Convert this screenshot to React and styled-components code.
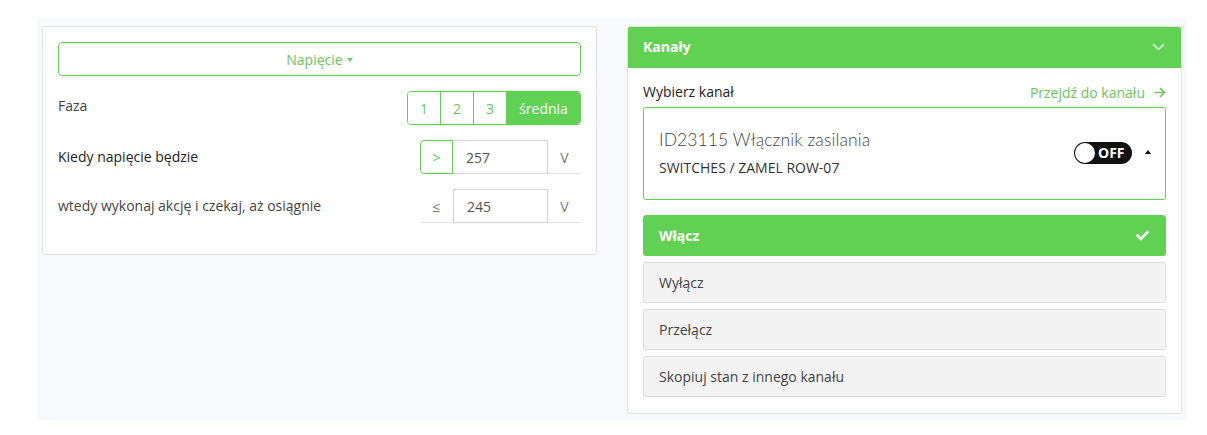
import React from "react";
import styled, { createGlobalStyle } from "styled-components";
import { FaCheck } from "react-icons/fa";

const green = "#60d152";
const textGreen = "#6cc462";

const GlobalStyle = createGlobalStyle`
  body {
    margin: 0;
    background: #ffffff;
    font-family: "Open Sans", "Liberation Sans", sans-serif;
    color: #333333;
  }
  * { box-sizing: border-box; }
`;

const Page = styled.div`
  padding: 18px 20px 15px 37px;
`;

const Area = styled.div`
  width: 1150px;
  background: #f8f9fa;
  padding: 8px 5px 6px;
  display: flex;
  align-items: flex-start;
  gap: 30px;
`;

const Card = styled.div`
  width: 555px;
  background: #ffffff;
  border: 1px solid #e2e4e0;
  border-radius: 3px;
  overflow: hidden;
`;

const CardBody = styled.div`
  padding: 15px 15px 16px;
  display: flex;
  flex-direction: column;
`;

const Dropdown = styled.div`
  height: 34px;
  border: 1px solid ${green};
  border-radius: 4px;
  color: ${textGreen};
  font-size: 14px;
  display: flex;
  align-items: center;
  justify-content: center;
  gap: 4px;
  margin-bottom: 15px;
`;

const Caret = styled.span`
  display: inline-block;
  width: 0;
  height: 0;
  border-left: 3px solid transparent;
  border-right: 3px solid transparent;
  border-${(p) => (p.$up ? "bottom" : "top")}: 4px solid ${(p) => p.$color || "currentColor"};
  margin-top: ${(p) => (p.$up ? "-1px" : "2px")};
`;

const Row = styled.div`
  display: flex;
  align-items: center;
  justify-content: space-between;
  height: 34px;
  margin-bottom: 15px;
  font-size: 14px;
`;

const Label = styled.span`
  color: ${(p) => (p.$strong ? "#222222" : "#444444")};
  font-weight: ${(p) => (p.$strong ? 500 : 400)};
  margin-top: ${(p) => (p.$up ? "-6px" : "-2px")};
`;

const BtnGroup = styled.div`
  display: flex;
  height: 34px;
  border: 1px solid ${green};
  border-radius: 4px;
  overflow: hidden;
`;

const GroupBtn = styled.div`
  width: ${(p) => (p.$wide ? "74px" : "33px")};
  display: flex;
  align-items: center;
  justify-content: center;
  font-size: 14px;
  color: ${(p) => (p.$active ? "#ffffff" : textGreen)};
  background: ${(p) => (p.$active ? green : "#ffffff")};
  border-left: 1px solid ${green};
  &:first-child { border-left: none; width: 32px; }
`;

const InputGroup = styled.div`
  display: flex;
  height: 34px;
`;

const Addon = styled.div`
  width: 33px;
  display: flex;
  align-items: center;
  justify-content: center;
  font-size: 14px;
  color: ${(p) => (p.$bordered ? textGreen : "#777777")};
  border: 1px solid ${(p) => (p.$bordered ? green : "transparent")};
  border-bottom-color: ${(p) => (p.$bordered ? green : "#e6e6e6")};
  border-radius: ${(p) => (p.$bordered ? "4px 0 0 4px" : "0")};
`;

const Unit = styled.div`
  width: 33px;
  display: flex;
  align-items: center;
  justify-content: center;
  font-size: 14px;
  color: #777777;
  border-bottom: 1px solid #e6e6e6;
  padding-top: 1px;
`;

const Input = styled.div`
  width: 95px;
  border: 1px solid #d4d4d4;
  border-left: ${(p) => (p.$joined ? "none" : "1px solid #d4d4d4")};
  display: flex;
  align-items: center;
  padding: 0 13px;
  font-size: 14px;
  color: #555555;
`;

const Header = styled.div`
  height: 41px;
  background: ${green};
  color: #ffffff;
  font-weight: 700;
  font-size: 14px;
  display: flex;
  align-items: center;
  justify-content: space-between;
  padding: 0 16px 2px 15px;
`;

const LabelLine = styled.div`
  display: flex;
  justify-content: space-between;
  align-items: center;
  font-size: 14px;
  height: 19px;
  margin: 0 0 5px;
`;

const LinkText = styled.span`
  color: ${textGreen};
  display: flex;
  align-items: center;
  gap: 9px;
`;

const Channel = styled.div`
  height: 93px;
  border: 1px solid ${green};
  border-radius: 3px;
  display: flex;
  align-items: center;
  justify-content: space-between;
  padding: 0 14px 2px 15px;
  margin-bottom: 15px;
`;

const ChannelInfo = styled.div`
  display: flex;
  flex-direction: column;
  gap: 8px;
`;

const ChannelName = styled.div`
  font-family: "Lato", "Open Sans", sans-serif;
  font-weight: 300;
  font-size: 17.5px;
  color: #444444;
  letter-spacing: 0.1px;
`;

const ChannelType = styled.div`
  font-size: 14px;
  color: #333333;
`;

const ChannelRight = styled.div`
  display: flex;
  align-items: center;
  gap: 13px;
`;

const Toggle = styled.div`
  width: 58px;
  height: 22px;
  background: #111111;
  border-radius: 11px;
  display: flex;
  align-items: center;
  padding: 0 2px 0 1px;
  gap: 3px;
  color: #ffffff;
  font-weight: 700;
  font-size: 14px;
`;

const Knob = styled.span`
  width: 20px;
  height: 20px;
  border-radius: 50%;
  background: #ffffff;
`;

const Actions = styled.div`
  display: flex;
  flex-direction: column;
  gap: 6px;
`;

const Action = styled.div`
  height: 41px;
  border-radius: 3px;
  display: flex;
  align-items: center;
  justify-content: space-between;
  padding: 0 16px 0 15px;
  font-size: 14px;
  background: ${(p) => (p.$active ? green : "#f3f3f3")};
  border: 1px solid ${(p) => (p.$active ? green : "#dedede")};
  color: ${(p) => (p.$active ? "#ffffff" : "#444444")};
  font-weight: ${(p) => (p.$active ? 700 : 400)};
`;

const Chevron = () => (
  <svg width="13" height="8" viewBox="0 0 13 8" fill="none">
    <path d="M1 1l5.5 5.5L12 1" stroke="#ffffff" strokeWidth="1.2" />
  </svg>
);

const Arrow = () => (
  <svg width="12" height="11" viewBox="0 0 12 11" fill="none">
    <path d="M0.5 5.5h10M6 1l4.5 4.5L6 10" stroke={textGreen} strokeWidth="1.6" />
  </svg>
);

export default function App() {
  return (
    <>
      <GlobalStyle />
      <Page>
        <Area>
          <Card>
            <CardBody>
              <Dropdown>
                Napięcie <Caret />
              </Dropdown>
              <Row>
                <Label $up>Faza</Label>
                <BtnGroup>
                  <GroupBtn>1</GroupBtn>
                  <GroupBtn>2</GroupBtn>
                  <GroupBtn>3</GroupBtn>
                  <GroupBtn $active $wide>średnia</GroupBtn>
                </BtnGroup>
              </Row>
              <Row>
                <Label $strong>Kiedy napięcie będzie</Label>
                <InputGroup>
                  <Addon $bordered>&gt;</Addon>
                  <Input $joined>257</Input>
                  <Unit>V</Unit>
                </InputGroup>
              </Row>
              <Row>
                <Label>wtedy wykonaj akcję i czekaj, aż osiągnie</Label>
                <InputGroup>
                  <Addon>≤</Addon>
                  <Input>245</Input>
                  <Unit>V</Unit>
                </InputGroup>
              </Row>
            </CardBody>
          </Card>
          <Card>
            <Header>
              Kanały
              <Chevron />
            </Header>
            <CardBody>
              <LabelLine>
                <Label $strong>Wybierz kanał</Label>
                <LinkText>
                  Przejdź do kanału <Arrow />
                </LinkText>
              </LabelLine>
              <Channel>
                <ChannelInfo>
                  <ChannelName>ID23115 Włącznik zasilania</ChannelName>
                  <ChannelType>SWITCHES / ZAMEL ROW-07</ChannelType>
                </ChannelInfo>
                <ChannelRight>
                  <Toggle>
                    <Knob />
                    OFF
                  </Toggle>
                  <Caret $up $color="#111111" />
                </ChannelRight>
              </Channel>
              <Actions>
                <Action $active>
                  Włącz
                  <FaCheck size={13} />
                </Action>
                <Action>Wyłącz</Action>
                <Action>Przełącz</Action>
                <Action>Skopiuj stan z innego kanału</Action>
              </Actions>
            </CardBody>
          </Card>
        </Area>
      </Page>
    </>
  );
}
